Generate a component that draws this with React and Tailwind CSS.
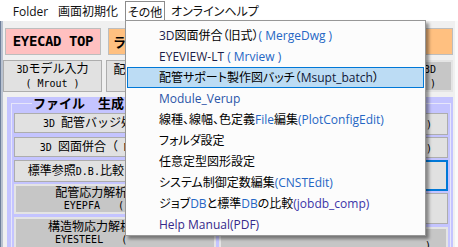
import React from 'react';

const MENU_FONT = "font-['Open_Sans','Noto_Sans_CJK_JP',sans-serif] [font-feature-settings:'palt']";
const BTN_FONT = "font-['Noto_Sans_CJK_JP',sans-serif]";

const BLUE = 'text-[#2566c4]';

const menuItems = [
  [{ t: '3D', c: 'text-[#1c2450]' }, { t: '図面併合（旧式）' }, { t: '( MergeDwg )', c: BLUE }],
  [{ t: 'EYEVIEW-LT ', c: 'text-[#1c1c48]' }, { t: '( Mrview )', c: BLUE }],
  [{ t: '配管サポート製作図バッチ（' }, { t: 'Msupt_batch', c: 'text-[#10183a]' }, { t: '）' }],
  [{ t: 'Module_Verup', c: 'text-[#2a55a8]' }],
  [{ t: '線種、線幅、色定義' }, { t: 'File', c: BLUE }, { t: '編集' }, { t: '(PlotConfigEdit)', c: BLUE }],
  [{ t: 'フォルダ設定' }],
  [{ t: '任意定型図形設定' }],
  [{ t: 'システム制御定数編集' }, { t: '(CNSTEdit)', c: BLUE }],
  [{ t: 'ジョブ' }, { t: 'DB', c: BLUE }, { t: 'と標準' }, { t: 'DB', c: BLUE }, { t: 'の比較' }, { t: '(jobdb_comp)', c: 'text-[#3b34a8]' }],
  [{ t: 'Help Manual(PDF)', c: 'text-[#35288a]' }],
];

// ascii runs get the narrow mono face, the rest stays in the CJK face
function Mix({ text }) {
  return text.split(/([\x20-\x7e]+)/).map((s, i) =>
    /^[\x20-\x7e]+$/.test(s) ? (
      <span key={i} className="font-['DejaVu_Sans_Mono',monospace] text-[10px] whitespace-pre">{s}</span>
    ) : (
      <span key={i}>{s}</span>
    )
  );
}

function Btn({ lines, dark, focus, align = 'center', className = '' }) {
  const face = focus
    ? 'border-2 border-[#0078d7] bg-[#e1e1e1]'
    : dark
    ? 'border-2 border-[#e4e4e4] bg-[#c6c6c6]'
    : 'border border-[#adadad] bg-[#e1e1e1]';
  const al = align === 'right' ? 'items-end pr-[15px]' : align === 'left' ? 'items-start' : 'items-center';
  return (
    <div className={`flex flex-col justify-center shrink-0 ${al} ${face} ${BTN_FONT} text-[12px] leading-[12px] text-black whitespace-nowrap overflow-hidden ${className}`}>
      {lines.map((l, i) => (
        <div key={i}>
          <Mix text={l} />
        </div>
      ))}
    </div>
  );
}

export default function App() {
  return (
    <div className="relative w-[458px] h-[247px] overflow-hidden bg-[#f0f0f0] flex flex-col">
      {/* menu bar */}
      <div className={`h-[21px] shrink-0 bg-white flex items-stretch text-[12px] text-[#111] whitespace-nowrap ${MENU_FONT}`}>
        <div className="w-[6px]" />
        <div className="w-[49px] flex items-center justify-center pt-[3px]">Folder</div>
        <div className="w-[66px] flex items-center justify-center pt-[3px]">画面初期化</div>
        <div className="w-[4px]" />
        <div className="w-[40px] mt-[1px] border border-b-0 border-[#8c8c8c] bg-white flex items-center justify-center pt-[2px]">その他</div>
        <div className="w-[5px]" />
        <div className="px-[1px] flex items-center pt-[3px]">オンラインヘルプ</div>
      </div>

      <div className="flex-1 flex min-h-0">
        <div className="w-[3px] shrink-0 bg-[#b9c2d0] border-l border-[#6e7f9a]" />

        <div className="w-[450px] flex flex-col pt-[7px]">
          {/* row 1 */}
          <div className="h-[27px] flex gap-[7px] pl-[2px] shrink-0">
            <div className="w-[96px] border border-[#bdbdbd] bg-[#ffc0c0] flex items-center justify-center font-['DejaVu_Sans_Mono',monospace] font-bold text-[14px] tracking-[-0.4px] text-black">
              EYECAD TOP
            </div>
            <div className={`w-[190px] border border-[#bdbdbd] bg-[#ffc080] flex items-center pl-[4px] font-bold text-[13px] ${BTN_FONT}`}>
              ライブラリ管理
            </div>
            <div className={`flex-1 -ml-[3px] border border-[#bdbdbd] bg-[#ffc080] flex items-center justify-center font-bold text-[13px] ${BTN_FONT}`}>
              設定
            </div>
          </div>

          {/* row 2 */}
          <div className="h-[32px] mt-[5px] flex gap-[4px] shrink-0">
            <Btn className="w-[99px]" lines={['3Dモデル入力', '( Mrout )']} />
            <Btn className="w-[99px]" lines={['配管モデル入力', '( Mpipe )']} />
            <Btn className="w-[99px]" lines={['機器モデル入力', '( Mequip )']} />
            <Btn className="flex-1" dark align="right" lines={['構造モデル入力 3D', '( Msteel )']} />
          </div>

          {/* file panel */}
          <div className="flex-1 mt-[5px] ml-[4px] bg-[#c4c4ff] pl-[4px] pr-[2px] min-h-0">
            <fieldset className="border border-[#e6e6fa] h-[200px] pl-[2px] pr-[2px]">
              <legend className={`ml-[18px] px-[1px] font-bold text-[13px] leading-[12px] text-black ${BTN_FONT}`}>
                ファイル　生成
              </legend>
              <div className="flex gap-[3px] pt-[4px]">
                <div className="w-[202px] flex flex-col">
                  <Btn className="h-[20px]" lines={['3D 配管バッジ処理( Mpb )']} />
                  <Btn className="h-[20px] mt-[4px]" lines={['3D 図面併合（ MergeDwg ）']} />
                  <Btn className="h-[22px] mt-[3px]" lines={['標準参照D.B.比較　( Mdbcomp )']} />
                  <Btn className="h-[30px] mt-[2px]" dark lines={['配管応力解析システム', 'EYEPFA   ( Mpfa )']} />
                  <div className={`h-[32px] mt-[3px] shrink-0 border-2 border-[#e4e4e4] bg-[#c6c6c6] flex flex-col justify-center pl-[32px] text-[12px] leading-[12px] text-black whitespace-nowrap overflow-hidden ${BTN_FONT}`}>
                    <div>構造物応力解析システム</div>
                    <div className="pl-[7px]">
                      <Mix text="EYESTEEL   (" />
                    </div>
                  </div>
                </div>
                <div className="flex-1 flex flex-col">
                  <Btn className="h-[22px]" align="right" lines={['部品ライブラリ登録 ( Mlib )']} />
                  <Btn className="h-[21px] mt-[2px]" align="right" lines={['図面一括印刷 ( Mplot )']} />
                  <Btn className="h-[31px] mt-[2px]" focus lines={['配管材料集計', '( Mbom )']} />
                  <Btn className="h-[31px] mt-[2px]" lines={['溶接線集計', '( Mweld )']} />
                  <div className="h-[30px] mt-[3px] shrink-0 border-2 border-[#e4e4e4] bg-[#c6c6c6] flex flex-col justify-end pb-[3px] leading-[12px] text-black">
                    <div className="text-right pr-[15px] font-['DejaVu_Sans_Mono',monospace] text-[10px]">)</div>
                  </div>
                </div>
              </div>
            </fieldset>
          </div>
        </div>

        <div className="w-[5px] shrink-0 flex">
          <div className="w-[2px]" />
          <div className="flex-1 bg-[#fafafa]" />
        </div>
      </div>

      {/* open "その他" dropdown */}
      <div className={`absolute left-[125px] top-[20px] w-[301px] h-[216px] bg-[#fcfcfc] border border-[#979797] shadow-[3px_3px_3px_rgba(0,0,0,0.4)] pt-[4px] px-[1px] text-[12px] text-black ${MENU_FONT}`}>
        {menuItems.map((segs, i) => (
          <div
            key={i}
            className={`h-[21px] flex items-center pl-[31px] whitespace-pre border ${
              i === 2 ? 'border-[#0078d7] bg-[#bcdcf4]' : 'border-transparent'
            }`}
          >
            {segs.map((s, j) => (
              <span key={j} className={s.c || ''}>
                {s.t}
              </span>
            ))}
          </div>
        ))}
      </div>
    </div>
  );
}
